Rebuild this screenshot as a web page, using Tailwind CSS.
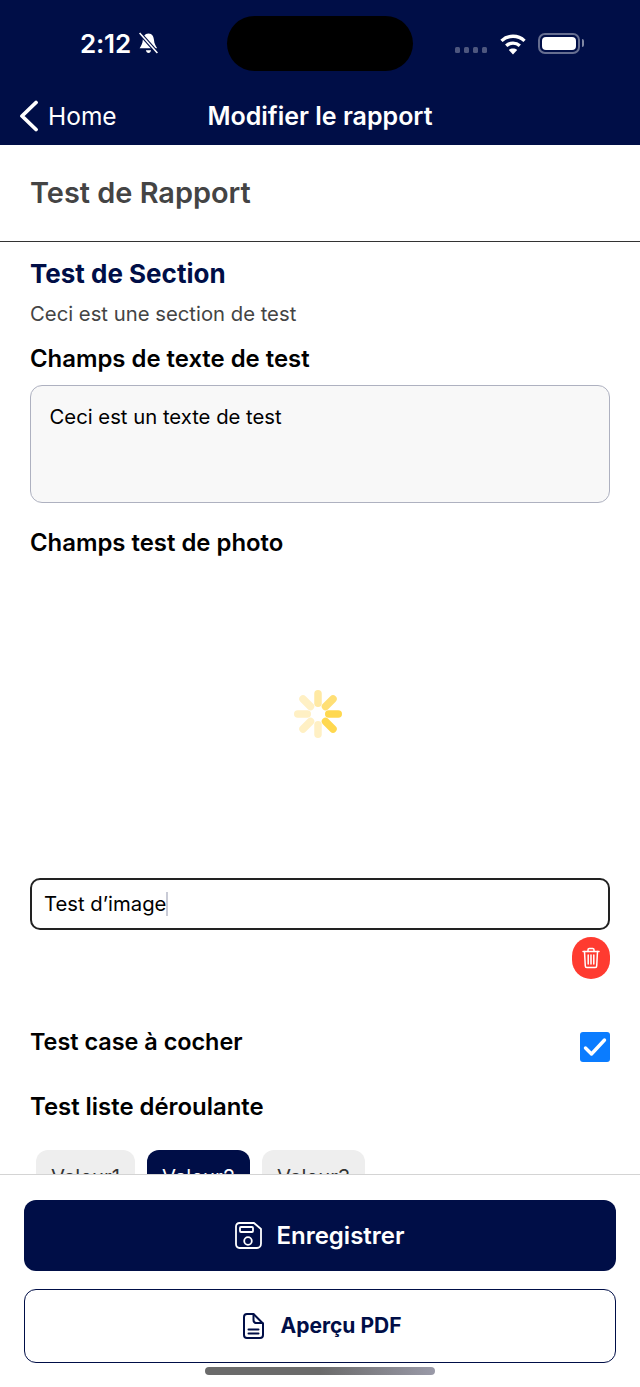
<!DOCTYPE html>
<html lang="fr">
<head>
  <meta charset="UTF-8" />
  <meta name="viewport" content="width=device-width, initial-scale=1.0" />
  <title>Modifier le rapport</title>
  <script src="https://cdn.jsdelivr.net/npm/@tailwindcss/browser@4"></script>
</head>
<body class="bg-white font-['Inter',sans-serif]">
  <div class="relative w-[640px] h-[1387px] overflow-hidden flex flex-col">

    <!-- header -->
    <header class="relative h-[145px] shrink-0 bg-[#000e47] text-white">
      <div class="absolute left-[227px] top-[16px] w-[186px] h-[55px] rounded-full bg-black"></div>
      <div class="flex items-center h-[87px] pl-[80px] pr-[56px]">
        <span class="text-[26px] font-semibold leading-none tracking-[-0.2px]">2:12</span>
        <svg class="ml-[7px]" width="21" height="23" viewBox="0 0 19 22" fill="#fff">
          <path d="M9.500 1.500c3.600 0 5 3 5.300 6.500.2 3 1.200 5 3 7.500H1c1.800-2.500 2.800-4.500 3-7.500C4.300 4.500 5.900 1.500 9.500 1.500z"/>
          <path d="M7 17.500h5c-.3 1.500-1.200 2.500-2.500 2.500S7.300 19 7 17.500z"/>
          <path d="M1 1l17 19" stroke="#000e47" stroke-width="3.600"/>
          <path d="M1 1l17 19" stroke="#fff" stroke-width="1.500"/>
        </svg>
        <div class="ml-auto flex items-center gap-[3.500px] mt-[12px]">
          <span class="w-[5.500px] h-[6px] rounded-[1.500px] bg-white/30"></span>
          <span class="w-[5.500px] h-[6px] rounded-[1.500px] bg-white/30"></span>
          <span class="w-[5.500px] h-[6px] rounded-[1.500px] bg-white/30"></span>
          <span class="w-[5.500px] h-[6px] rounded-[1.500px] bg-white/30"></span>
        </div>
        <svg class="ml-[12px]" width="28" height="22" viewBox="0 0 25 21" fill="none" stroke="#fff" stroke-width="3.200">
          <path d="M1.500 7.500c6.200-5.800 15.800-5.800 22 0"/>
          <path d="M6 12.200c3.700-3.300 9.300-3.300 13 0"/>
          <path d="M12.500 20.500l-4-4.300c2.300-1.800 5.700-1.800 8 0z" fill="#fff" stroke="none"/>
        </svg>
        <div class="ml-[11px] mr-[4px] relative w-[42px] h-[21px] rounded-[7px] border-2 border-white/40 p-[2px]">
          <div class="w-full h-full rounded-[4px] bg-white"></div>
          <div class="absolute right-[-6px] top-[4px] w-[2.500px] h-[8px] rounded-r-full bg-white/50"></div>
        </div>
      </div>
      <div class="relative flex items-center justify-center h-[58px]">
        <div class="absolute left-[19px] top-[13px] flex items-center">
          <svg width="20" height="32" viewBox="0 0 20 32" fill="none" stroke="#fff" stroke-width="3.800" stroke-linecap="round" stroke-linejoin="round">
            <path d="M17 2.500L3 16l14 13.500"/>
          </svg>
          <span class="ml-[9px] text-[24.500px] leading-none">Home</span>
        </div>
        <h1 class="text-[25px] font-semibold leading-none">Modifier le rapport</h1>
      </div>
    </header>

    <!-- report title -->
    <div class="h-[97px] shrink-0 border-b border-[#333] px-[30px] pt-[32px]">
      <h2 class="text-[28.900px] font-semibold leading-[32px] text-[#444]">Test de Rapport</h2>
    </div>

    <!-- form -->
    <main class="flex-1 min-h-0 overflow-hidden px-[30px]">
      <h3 class="mt-[16px] text-[26px] font-bold leading-[32px] text-[#000e47]">Test de Section</h3>
      <p class="mt-[12px] text-[20.300px] leading-[24px] text-[#444]">Ceci est une section de test</p>
      <label class="block mt-[19px] text-[23.900px] font-semibold leading-[28px] text-black">Champs de texte de test</label>
      <div class="mt-[12px] h-[118px] rounded-[12px] border border-[#aeb1c0] bg-[#f8f8f8] px-[18.500px] py-[19px] text-[20.300px] leading-[24px] text-black">Ceci est un texte de test</div>
      <label class="block mt-[26px] text-[23.900px] font-semibold leading-[28px] text-black">Champs test de photo</label>

      <div class="h-[321px] pb-[8px] flex items-center justify-center">
        <svg class="ml-[-4px]" width="50" height="50" viewBox="0 0 50 50" fill="none" stroke-width="7.500" stroke-linecap="round">
          <path d="M25 4.750v9.500" stroke="#ffe9a3"/>
          <path d="M40 10l-7.500 7.500" stroke="#ffdf75"/>
          <path d="M45.250 25h-9.500" stroke="#ffd84f"/>
          <path d="M40 40l-7.500-7.500" stroke="#ffd84f"/>
          <path d="M25 45.250v-9.500" stroke="#fff0c4"/>
          <path d="M10 40l7.500-7.500" stroke="#fff0c4"/>
          <path d="M4.750 25h9.500" stroke="#fff0c4"/>
          <path d="M10 10l7.500 7.500" stroke="#fff0c4"/>
        </svg>
      </div>

      <div class="h-[52px] rounded-[10px] border-2 border-[#222] px-[12px] flex items-center text-[20.300px] text-black">
        <span>Test d’image</span><span class="w-[2px] h-[24px] bg-[#c9cbd6]"></span>
      </div>
      <div class="mt-[7px] flex justify-end">
        <button class="w-[38px] h-[42px] rounded-full bg-[#ff3b30] flex items-center justify-center">
          <svg width="18" height="22" viewBox="0 0 18 22" fill="none" stroke="#fff" stroke-width="1.500" stroke-linecap="round" stroke-linejoin="round">
            <path d="M1 4.500h16"/>
            <path d="M6 4.500V2.800c0-.8.600-1.300 1.300-1.300h3.400c.7 0 1.300.5 1.300 1.300v1.700"/>
            <path d="M2.500 4.500l.8 14.500c0 1 .7 1.500 1.500 1.500h8.400c.8 0 1.500-.5 1.500-1.500l.8-14.500"/>
            <path d="M6.200 8v9M9 8v9M11.800 8v9"/>
          </svg>
        </button>
      </div>

      <div class="mt-[49px] flex items-start justify-between">
        <label class="text-[23.400px] font-semibold leading-[28px] text-black">Test case à cocher</label>
        <div class="mt-[4px] w-[30px] h-[30px] rounded-[3px] bg-[#0a7cff] flex items-center justify-center">
          <svg width="24" height="20" viewBox="0 0 24 20" fill="none" stroke="#fff" stroke-width="3.400" stroke-linecap="round" stroke-linejoin="round">
            <path d="M2.500 11l6 6L21.500 3"/>
          </svg>
        </div>
      </div>

      <label class="block mt-[31px] text-[23.900px] font-semibold leading-[28px] text-black">Test liste déroulante</label>
      <div class="mt-[29px] ml-[6px] flex gap-[12px]">
        <span class="h-[50px] rounded-[12px] bg-[#eeeeee] px-[15px] pt-[15px] text-[20.300px] leading-[24px] text-[#333]">Valeur1</span>
        <span class="h-[50px] rounded-[12px] bg-[#000e47] px-[15px] pt-[15px] text-[20.300px] leading-[24px] text-white">Valeur2</span>
        <span class="h-[50px] rounded-[12px] bg-[#eeeeee] px-[15px] pt-[15px] text-[20.300px] leading-[24px] text-[#333]">Valeur3</span>
      </div>
    </main>

    <!-- footer -->
    <footer class="h-[213px] shrink-0 bg-white border-t border-[#d4d4d4] px-[24px] pt-[25px]">
      <button class="w-full h-[71px] rounded-[12px] bg-[#000e47] flex items-center justify-center gap-[14px] text-white text-[24px] font-semibold">
        <svg width="27" height="27" viewBox="0 0 27 27" fill="none" stroke="#fff" stroke-width="1.800" stroke-linejoin="round">
          <path d="M4.500 1h14.500l7 6v14.500c0 2.400-1.600 4.500-4 4.500H4.500C2.400 26 1 24.400 1 22V4.500C1 2.500 2.400 1 4.500 1z"/>
          <rect x="5" y="5" width="13" height="5" rx="1"/>
          <circle cx="13" cy="19" r="3.800"/>
        </svg>
        <span>Enregistrer</span>
      </button>
      <button class="mt-[18px] w-full h-[74px] rounded-[12px] border border-[#000e47] bg-white flex items-center justify-center gap-[17px] pl-[4px] text-[#000e47] text-[21px] font-bold">
        <svg width="21" height="26" viewBox="0 0 21 26" fill="none" stroke="#000e47" stroke-width="2" stroke-linecap="round" stroke-linejoin="round">
          <path d="M4 1h6.500L20 10.500V22c0 1.700-1.300 3-3 3H4c-1.700 0-3-1.300-3-3V4c0-1.700 1.300-3 3-3z"/>
          <path d="M10.500 1.500V7c0 1.700 1.300 3 3 3H19.500"/>
          <path d="M5.500 16.500h10M5.500 20.500h10"/>
        </svg>
        <span>Aperçu PDF</span>
      </button>
    </footer>

    <!-- home indicator -->
    <div class="absolute left-[205px] top-[1367px] w-[230px] h-[8px] rounded-full bg-linear-to-r from-[#6b6b6b] via-[#6b6b6b] to-[#9a9aa8]"></div>
  </div>
</body>
</html>
